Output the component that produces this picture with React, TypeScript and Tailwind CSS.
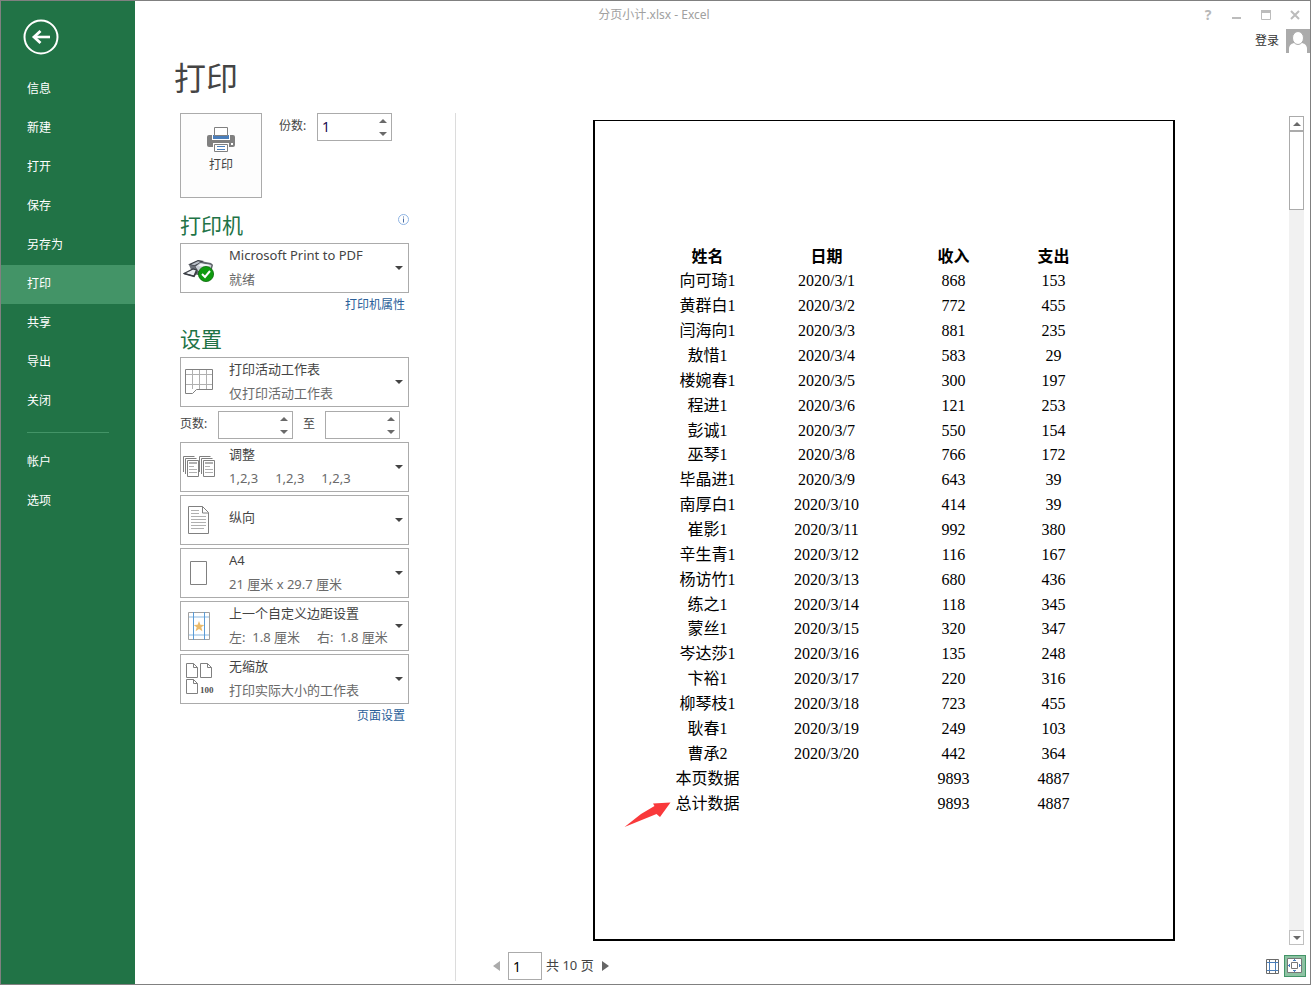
import React, { useState } from 'react';

const NAV_ITEMS = ['信息', '新建', '打开', '保存', '另存为', '打印', '共享', '导出', '关闭'];
const NAV_EXTRA = ['帐户', '选项'];

const ROWS: [string, string, string, string][] = [
  ['向可琦1', '2020/3/1', '868', '153'],
  ['黄群白1', '2020/3/2', '772', '455'],
  ['闫海向1', '2020/3/3', '881', '235'],
  ['敖惜1', '2020/3/4', '583', '29'],
  ['楼婉春1', '2020/3/5', '300', '197'],
  ['程进1', '2020/3/6', '121', '253'],
  ['彭诚1', '2020/3/7', '550', '154'],
  ['巫琴1', '2020/3/8', '766', '172'],
  ['毕晶进1', '2020/3/9', '643', '39'],
  ['南厚白1', '2020/3/10', '414', '39'],
  ['崔影1', '2020/3/11', '992', '380'],
  ['辛生青1', '2020/3/12', '116', '167'],
  ['杨访竹1', '2020/3/13', '680', '436'],
  ['练之1', '2020/3/14', '118', '345'],
  ['蒙丝1', '2020/3/15', '320', '347'],
  ['岑达莎1', '2020/3/16', '135', '248'],
  ['卞裕1', '2020/3/17', '220', '316'],
  ['柳琴枝1', '2020/3/18', '723', '455'],
  ['耿春1', '2020/3/19', '249', '103'],
  ['曹承2', '2020/3/20', '442', '364'],
  ['本页数据', '', '9893', '4887'],
  ['总计数据', '', '9893', '4887'],
];

/* Icons */

const BackIcon = () => (
  <svg width="36" height="36" viewBox="0 0 36 36" fill="none" stroke="#fff">
    <circle cx="18" cy="18" r="16.5" strokeWidth="2" />
    <path d="M27 18H11" strokeWidth="2.6" />
    <path d="M17.5 12L11 18l6.5 6" strokeWidth="2.8" />
  </svg>
);

const PrintIcon = () => (
  <svg width="28" height="26" viewBox="0 0 28 26">
    <path d="M2 8h24a2 2 0 0 1 2 2v8a2 2 0 0 1-2 2H2a2 2 0 0 1-2-2v-8a2 2 0 0 1 2-2z" fill="#808080" />
    <path d="M5 7h18v6H5z" fill="#fff" />
    <path d="M6 8h16v4H6z" fill="#4a7ebb" />
    <path d="M7.5 .5h13v8h-13z" fill="#fff" stroke="#808080" />
    <path d="M6 16h16v4H6z" fill="#fff" />
    <path d="M7.5 17.5h13v7h-13z" fill="#fff" stroke="#808080" />
    <path d="M10 19.5h8M10 22.5h8" stroke="#4a7ebb" />
    <path d="M24 16h2v2h-2z" fill="#fff" />
  </svg>
);

const DeviceIcon = () => (
  <svg width="32" height="28" viewBox="0 0 32 28">
    <path d="M6 11l9-4.500 13 2.500 2 2-2 8-14 2-5-3z" fill="#6b7078" />
    <path d="M5 10.500L15 6l6 1-9 5z" fill="#3b3f45" />
    <path d="M8 10.500l7-3.200 3 .6-6.500 3.400z" fill="#b9bfc7" />
    <path d="M12 12.500l5-4 12 2-1 6-13 1z" fill="#c9ced5" stroke="#4b4f55" strokeWidth=".8" />
    <path d="M15 12l3-2.500 9 1.500-2 2.500z" fill="#f4f6f8" />
    <path d="M1 19.500l9-4.500 3.500 1-2.500 6z" fill="#eceff2" stroke="#3b3f45" strokeWidth="1.2" />
    <path d="M1 19.500l10 3 3-5" fill="none" stroke="#3b3f45" strokeWidth="1.400" />
    <circle cx="23" cy="20" r="7.600" fill="#0f9b0f" stroke="#0a6a0a" strokeWidth=".8" />
    <path d="M19 20l3 3 5-6" fill="none" stroke="#fff" strokeWidth="2" />
  </svg>
);

const SheetIcon = () => (
  <svg width="28" height="26" viewBox="0 0 28 26" fill="none">
    <path d="M1 5.5h26M1 15.5h26M7.5 1v19M14.5 1v19M21.5 1v19" stroke="#b0b0b0" />
    <path d="M.5 .5h27v20h-16l-4 4h-7z" stroke="#808080" />
  </svg>
);

const CollateIcon = () => (
  <svg width="32" height="22" viewBox="0 0 32 22" fill="none">
    {[0, 16].map((x) => (
      <g key={x}>
        <path d={`M${x + 0.5} 16V.5h11M${x + 2.5} 18V2.5h11`} stroke="#808080" />
        <path d={`M${x + 4.5} 4.5h11v16h-11z`} stroke="#808080" fill="#fff" />
        <path d={`M${x + 6} 7h8`} stroke="#b0b0b0" strokeWidth="2" />
        <path d={`M${x + 6} 10.5h5M${x + 6} 13.5h8M${x + 6} 16.5h8`} stroke="#b0b0b0" />
      </g>
    ))}
  </svg>
);

const PortraitIcon = () => (
  <svg width="22" height="28" viewBox="0 0 22 28" fill="none">
    <path d="M.5 .5h14l6 6v21H.5z" stroke="#808080" />
    <path d="M14.5 .5v6.5h6" stroke="#808080" />
    <path d="M3 4.5h8M3 7.5h8M3 10.5h15M3 13.5h15M3 16.5h15M3 19.5h15M3 22.5h13" stroke="#b0b0b0" />
  </svg>
);

const PaperIcon = () => (
  <svg width="18" height="24" viewBox="0 0 18 24" fill="none">
    <path d="M.5 .5h16v23H.5z" stroke="#808080" />
  </svg>
);

const MarginIcon = () => (
  <svg width="24" height="28" viewBox="0 0 24 28" fill="none">
    <path d="M1.5 .5h21v27h-21z" stroke="#a0a0a0" />
    <path d="M2 5h20M2 23h20" stroke="#c5dcf0" strokeWidth="2" />
    <path d="M6.5 0v28M17.5 0v28" stroke="#5b9bd5" />
    <path d="M12 9l1.4 3.7 4 .2-3.1 2.4 1.1 3.9-3.4-2.2-3.4 2.2 1.1-3.9-3.1-2.4 4-.2z" fill="#eabb6c" />
  </svg>
);

const ScaleIcon = () => (
  <svg width="30" height="32" viewBox="0 0 30 32" fill="none" stroke="#808080">
    <path d="M2.5 .5h7l4 4v10h-11zM9.500 .5v4h4" />
    <path d="M16.5 .5h7l4 4v10h-11zM23.5 .5v4h4" />
    <path d="M2.5 16.5h7l4 4v10h-11zM9.500 16.5v4h4" />
    <text x="16" y="30" fill="#505050" stroke="none" className="font-['Liberation_Serif',serif] text-[9px] font-bold">
      100
    </text>
  </svg>
);

const Triangle = ({ up = false, className = 'fill-[#6a6a6a]' }: { up?: boolean; className?: string }) => (
  <svg width="8" height="4" viewBox="0 0 8 4" className={className}>
    <path d={up ? 'M0 4h8L4 0z' : 'M0 0h8L4 4z'} />
  </svg>
);

/* Controls */

const SpinBox = ({ id, label, initial = '' }: { id: string; label: string; initial?: string }) => {
  const [value, setValue] = useState(initial);
  const step = (n: number) => setValue(String(Math.max(1, (parseInt(value) || 0) + n)));

  return (
    <div className="flex h-7 w-[75px] border border-[#ababab] bg-white">
      <input
        id={id}
        aria-label={label}
        value={value}
        onChange={(e) => setValue(e.target.value)}
        className="w-[57px] pb-0.5 pl-1 text-[14px] text-[#1a0a50] outline-none"
      />
      <div className="flex flex-1 flex-col">
        <button aria-label={`${label} +`} onClick={() => step(1)} className="flex flex-1 items-center justify-center">
          <Triangle up />
        </button>
        <button aria-label={`${label} -`} onClick={() => step(-1)} className="flex flex-1 items-center justify-center">
          <Triangle />
        </button>
      </div>
    </div>
  );
};

interface PickerProps {
  label: string;
  value: string;
  detail?: string;
  icon: React.ReactNode;
}

const Picker = ({ label, value, detail, icon }: PickerProps) => (
  <div className="grid h-[50px] grid-cols-[36px_12px_1fr_18px] grid-rows-[24px_24px] border border-[#ababab]">
    <select
      aria-label={label}
      className={`col-span-full row-span-full row-start-1 col-start-1 appearance-none bg-transparent pl-12 text-[13px] text-[#444] outline-none ${detail ? 'pb-6' : 'pb-1'}`}
    >
      <option>{value}</option>
    </select>
    <span className="pointer-events-none col-start-1 row-span-full row-start-1 flex items-center justify-center">{icon}</span>
    {detail && (
      <span className="pointer-events-none col-start-3 row-start-2 whitespace-pre text-[13px] leading-[22px] text-[#6a6a6a]">
        {detail}
      </span>
    )}
    <span className="pointer-events-none col-start-4 row-span-full row-start-1 flex items-center justify-center">
      <Triangle className="fill-[#444]" />
    </span>
  </div>
);

const NavLink = ({ text, active = false }: { text: string; active?: boolean }) => (
  <li>
    <a
      href="#"
      aria-current={active ? 'page' : undefined}
      className={`block h-[39px] pl-[26px] text-[12px] leading-[37px] text-white ${active ? 'bg-[#439467]' : ''}`}
    >
      {text}
    </a>
  </li>
);

const Sidebar = () => (
  <nav className="w-[134px] shrink-0 bg-[#217346]">
    <button aria-label="返回" className="mt-[18px] ml-[22px] block">
      <BackIcon />
    </button>
    <ul className="mt-[15px]">
      {NAV_ITEMS.map((t) => (
        <NavLink key={t} text={t} active={t === '打印'} />
      ))}
    </ul>
    <hr className="mt-[11px] mr-[26px] mb-[10px] ml-[26px] border-[#439467]" />
    <ul>
      {NAV_EXTRA.map((t) => (
        <NavLink key={t} text={t} />
      ))}
    </ul>
  </nav>
);

const TitleBar = () => (
  <header>
    <div className="flex h-7 items-center text-[12px] text-[#a0a0a0]">
      <span className="flex-1 text-center">分页小计.xlsx - Excel</span>
      <div className="flex w-[137px] items-center justify-end gap-[17px] pr-[9px]">
        <button aria-label="帮助" className="w-3 text-[14px] leading-5 font-bold text-[#b8b8b8]">?</button>
        <button aria-label="最小化">
          <svg width="12" height="12" viewBox="0 0 12 12"><path d="M1 8h9v2H1z" fill="#bcbcbc" /></svg>
        </button>
        <button aria-label="最大化">
          <svg width="12" height="12" viewBox="0 0 12 12"><path d="M1.5 1.5h9v9h-9z" fill="none" stroke="#bcbcbc" /><path d="M1 1h10v3H1z" fill="#bcbcbc" /></svg>
        </button>
        <button aria-label="关闭窗口">
          <svg width="12" height="12" viewBox="0 0 12 12"><path d="M2 2l8 8M10 2l-8 8" stroke="#bcbcbc" strokeWidth="2" /></svg>
        </button>
      </div>
    </div>
    <div className="flex h-6 items-center justify-end gap-[7px]">
      <a href="#" className="text-[12px] text-[#333]">登录</a>
      <svg width="24" height="24" viewBox="0 0 24 24">
        <path d="M0 0h24v24H0z" fill="#ababab" />
        <path d="M3 24v-4c0-4 3-6 6-6h6c3 0 6 2 6 6v4z" fill="#fff" />
        <ellipse cx="12" cy="9" rx="5.500" ry="6.500" fill="#fff" stroke="#ababab" />
      </svg>
    </div>
  </header>
);

const Settings = () => (
  <section className="w-[321px] shrink-0 border-r border-[#dcdcdc] pr-[46px] pl-[45px] text-[12px] text-[#444]">
    <div className="flex">
      <button className="flex h-[85px] w-[82px] flex-col items-center border border-[#ababab] bg-[#fdfdfd] pt-[13px]">
        <PrintIcon />
        <span className="mt-1 leading-4">打印</span>
      </button>
      <label htmlFor="copies" className="ml-[17px] w-[38px] leading-[26px]">份数:</label>
      <SpinBox id="copies" label="份数" initial="1" />
    </div>

    <div className="mt-[13px] mb-1 flex items-start justify-between">
      <h2 className="text-[21px] leading-7 text-[#217346]">打印机</h2>
      <svg width="11" height="11" viewBox="0 0 11 11" className="mt-[3px]">
        <circle cx="5.5" cy="5.5" r="5" fill="#fff" stroke="#8fb4e3" />
        <path d="M5 2.5h1v1H5zM5 4.5h1v4H5z" fill="#4a6fa5" />
      </svg>
    </div>
    <Picker label="打印机" value="Microsoft Print to PDF" detail="就绪" icon={<DeviceIcon />} />
    <p className="h-6 pr-1 text-right leading-6">
      <a href="#" className="text-[#2a6099]">打印机属性</a>
    </p>

    <h2 className="mt-2 mb-1 text-[21px] leading-7 text-[#217346]">设置</h2>
    <Picker label="打印范围" value="打印活动工作表" detail="仅打印活动工作表" icon={<SheetIcon />} />
    <div className="mt-1 mb-[3px] flex">
      <label htmlFor="from" className="w-[38px] leading-[26px]">页数:</label>
      <SpinBox id="from" label="起始页" />
      <label htmlFor="to" className="w-8 text-center leading-[26px]">至</label>
      <SpinBox id="to" label="结束页" />
    </div>
    <div className="flex flex-col gap-[3px]">
      <Picker label="调整" value="调整" detail="1,2,3     1,2,3     1,2,3" icon={<CollateIcon />} />
      <Picker label="方向" value="纵向" icon={<PortraitIcon />} />
      <Picker label="纸张" value="A4" detail="21 厘米 x 29.7 厘米" icon={<PaperIcon />} />
      <Picker label="边距" value="上一个自定义边距设置" detail="左:  1.8 厘米     右:  1.8 厘米" icon={<MarginIcon />} />
      <Picker label="缩放" value="无缩放" detail="打印实际大小的工作表" icon={<ScaleIcon />} />
    </div>
    <p className="h-6 pr-1 text-right leading-6">
      <a href="#" className="text-[#2a6099]">页面设置</a>
    </p>
  </section>
);

const SheetPage = () => (
  <div className="min-h-[821px] w-[582px] border-2 border-t border-black pt-[124px] pl-[71px]">
    <table className="h-[571px] w-[438px] table-fixed text-center font-['Liberation_Serif','Noto_Sans_CJK_SC',serif] text-[16px] leading-6 text-black">
      <colgroup>
        <col className="w-[84px]" />
        <col className="w-[154px]" />
        <col className="w-[100px]" />
        <col className="w-[100px]" />
      </colgroup>
      <thead>
        <tr>
          {['姓名', '日期', '收入', '支出'].map((h) => (
            <th key={h} className="p-0 font-bold">{h}</th>
          ))}
        </tr>
      </thead>
      <tbody>
        {ROWS.map(([name, date, income, expense]) => (
          <tr key={name}>
            <td className="relative p-0">
              {name}
              {name === '总计数据' && (
                <svg width="47" height="26" viewBox="0 0 47 26" className="absolute top-[11px] -left-[42px]">
                  <path d="M46.5 .5L29 1.5l1.500 2.500L17 12 .5 25l32-13 3.500 3z" fill="#f9393b" />
                </svg>
              )}
            </td>
            <td className="p-0">{date}</td>
            <td className="p-0">{income}</td>
            <td className="p-0">{expense}</td>
          </tr>
        ))}
      </tbody>
    </table>
  </div>
);

const ScrollBar = () => (
  <div className="flex w-[15px] flex-col bg-[#f1f1f1]">
    <button aria-label="向上滚动" className="flex h-[15px] items-center justify-center border border-[#ababab] bg-white">
      <Triangle up />
    </button>
    <div className="h-[79px] border border-[#ababab] bg-white" />
    <button aria-label="向下滚动" className="mt-auto flex h-[15px] items-center justify-center border border-[#c0c0c0] bg-white">
      <Triangle />
    </button>
  </div>
);

const PreviewFooter = () => {
  const [page, setPage] = useState(1);
  const go = (n: number) => setPage(Math.min(10, Math.max(1, n)));

  return (
    <footer className="flex h-9 items-center pt-[6px] pr-1 pl-[37px] text-[13px] text-[#444]">
      <button aria-label="上一页" onClick={() => go(page - 1)}>
        <svg width="7" height="10" viewBox="0 0 7 10"><path d="M7 0v10L0 5z" fill="#ababab" /></svg>
      </button>
      <input
        aria-label="页码"
        value={page}
        onChange={(e) => go(Number(e.target.value) || 1)}
        className="ml-2 h-7 w-[34px] border border-[#ababab] pl-1 text-[14px] text-black outline-none"
      />
      <span className="ml-1 pb-0.5 leading-5">共 10 页</span>
      <button aria-label="下一页" onClick={() => go(page + 1)} className="ml-2">
        <svg width="7" height="10" viewBox="0 0 7 10"><path d="M0 0v10l7-5z" fill="#666" /></svg>
      </button>
      <button aria-label="显示边距" className="ml-auto">
        <svg width="13" height="15" viewBox="0 0 13 15" fill="none">
          <path d="M.5 .5h12v14H.5zM3.5 0v15M9.5 0v15M0 3.5h13M0 11.5h13" stroke="#6a6a6a" />
          <path d="M3.5 3v9M9.5 3v9M1 3.5h11M1 11.5h11" stroke="#4a7ebb" />
        </svg>
      </button>
      <button aria-label="缩放到页面" className="ml-[5px] flex size-[22px] items-center justify-center border border-[#439467] bg-[#8cc2a2]">
        <svg width="16" height="16" viewBox="0 0 16 16" fill="none">
          <path d="M.5 .5h14v14H.5z" fill="#fff" stroke="#777" />
          <path d="M4.5 4.5h6v6h-6z" stroke="#777" />
          <path d="M7.5 1v2M7.5 12v2M1 7.5h2M12 7.5h2M6 2.5h3M6 12.5h3M2.5 6v3M12.5 6v3" stroke="#4a7ebb" />
        </svg>
      </button>
    </footer>
  );
};

export default function App() {
  return (
    <div className="flex min-h-screen border border-[#808080] bg-white font-['Noto_Sans','Noto_Sans_CJK_SC',sans-serif]">
      <Sidebar />
      <main className="flex min-w-0 flex-1 flex-col pb-[3px]">
        <TitleBar />
        <h1 className="mt-[5px] mb-[15px] ml-[39px] text-[32px] leading-10 text-[#444]">打印</h1>
        <div className="flex flex-1">
          <Settings />
          <section className="flex flex-1 flex-col pt-[3px]">
            <div className="flex flex-1 pr-[6px]">
              <div className="flex flex-1 items-start justify-center pt-1 pl-[22px]">
                <SheetPage />
              </div>
              <ScrollBar />
            </div>
            <PreviewFooter />
          </section>
        </div>
      </main>
    </div>
  );
}
